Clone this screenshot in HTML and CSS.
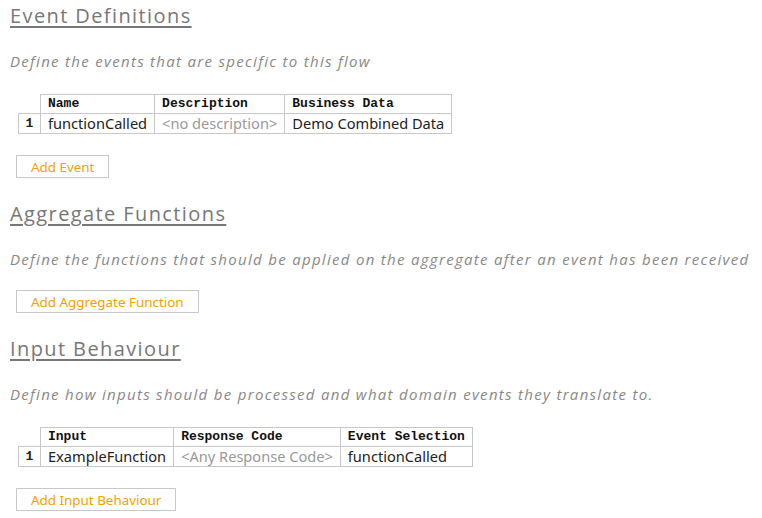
FILE: index.html
```html
<!DOCTYPE html>
<html>
<head>
<meta charset="utf-8">
<link rel="stylesheet" href="styles.css">
</head>
<body>
<div class="page">
  <section class="section">
    <h2 class="title">Event Definitions</h2>
    <p class="desc">Define the events that are specific to this flow</p>
    <table class="grid">
      <thead>
        <tr><th class="idx-head"></th><th>Name</th><th>Description</th><th>Business Data</th></tr>
      </thead>
      <tbody>
        <tr><td class="idx">1</td><td>functionCalled</td><td class="muted">&lt;no description&gt;</td><td>Demo Combined Data</td></tr>
      </tbody>
    </table>
    <button class="add">Add Event</button>
  </section>
  <section class="section">
    <h2 class="title">Aggregate Functions</h2>
    <p class="desc">Define the functions that should be applied on the aggregate after an event has been received</p>
    <button class="add">Add Aggregate Function</button>
  </section>
  <section class="section">
    <h2 class="title">Input Behaviour</h2>
    <p class="desc">Define how inputs should be processed and what domain events they translate to.</p>
    <table class="grid">
      <thead>
        <tr><th class="idx-head"></th><th>Input</th><th>Response Code</th><th>Event Selection</th></tr>
      </thead>
      <tbody>
        <tr><td class="idx">1</td><td>ExampleFunction</td><td class="muted">&lt;Any Response Code&gt;</td><td>functionCalled</td></tr>
      </tbody>
    </table>
    <button class="add">Add Input Behaviour</button>
  </section>
</div>
</body>
</html>
```

FILE: styles.css
```css
html, body {
  margin: 0;
  padding: 0;
  background: #ffffff;
}

.page {
  padding: 4px 10px 0 10px;
  display: flex;
  flex-direction: column;
  gap: 24px;
  font-family: "Open Sans", "Noto Sans", sans-serif;
}

.section {
  display: flex;
  flex-direction: column;
  align-items: flex-start;
}

.title {
  margin: 0;
  font-family: "Open Sans", sans-serif;
  font-size: 20px;
  line-height: 24px;
  font-weight: 500;
  color: #777777;
  letter-spacing: 1.4px;
  text-decoration: underline;
  text-decoration-thickness: 2px;
  text-underline-offset: 3px;
}

.desc {
  margin: 23px 0 0 0;
  font-size: 15px;
  line-height: 20px;
  font-style: italic;
  color: #888888;
  letter-spacing: 1.3px;
  white-space: nowrap;
}

.grid {
  margin: 23px 0 0 8px;
  border-collapse: collapse;
  font-size: 14.6px;
  color: #222222;
}

.grid th {
  font-family: "Liberation Mono", "DejaVu Sans Mono", monospace;
  font-weight: bold;
  font-size: 13px;
  line-height: 18px;
  text-align: left;
  height: 19px;
  padding: 0 7px;
  border: 1px solid #c8c8c8;
  color: #111111;
  box-sizing: border-box;
}

.grid th.idx-head {
  border-top: none;
  border-left: none;
}

.grid td {
  height: 20px;
  line-height: 19px;
  padding: 0 7px;
  border: 1px solid #c8c8c8;
  font-family: "Noto Sans", "Open Sans", sans-serif;
  white-space: nowrap;
  box-sizing: border-box;
}

.grid td.idx {
  width: 22px;
  padding: 0;
  font-family: "Liberation Mono", monospace;
  font-weight: bold;
  font-size: 13px;
  text-align: center;
}

.grid td.muted {
  color: #999999;
}

.add {
  margin: 21px 0 0 6px;
  height: 23px;
  padding: 0 14px;
  background: #ffffff;
  border: 1px solid #c8c8c8;
  color: #f5a000;
  font-family: "Noto Sans", "Open Sans", sans-serif;
  font-size: 13.4px;
  cursor: pointer;
}
```
